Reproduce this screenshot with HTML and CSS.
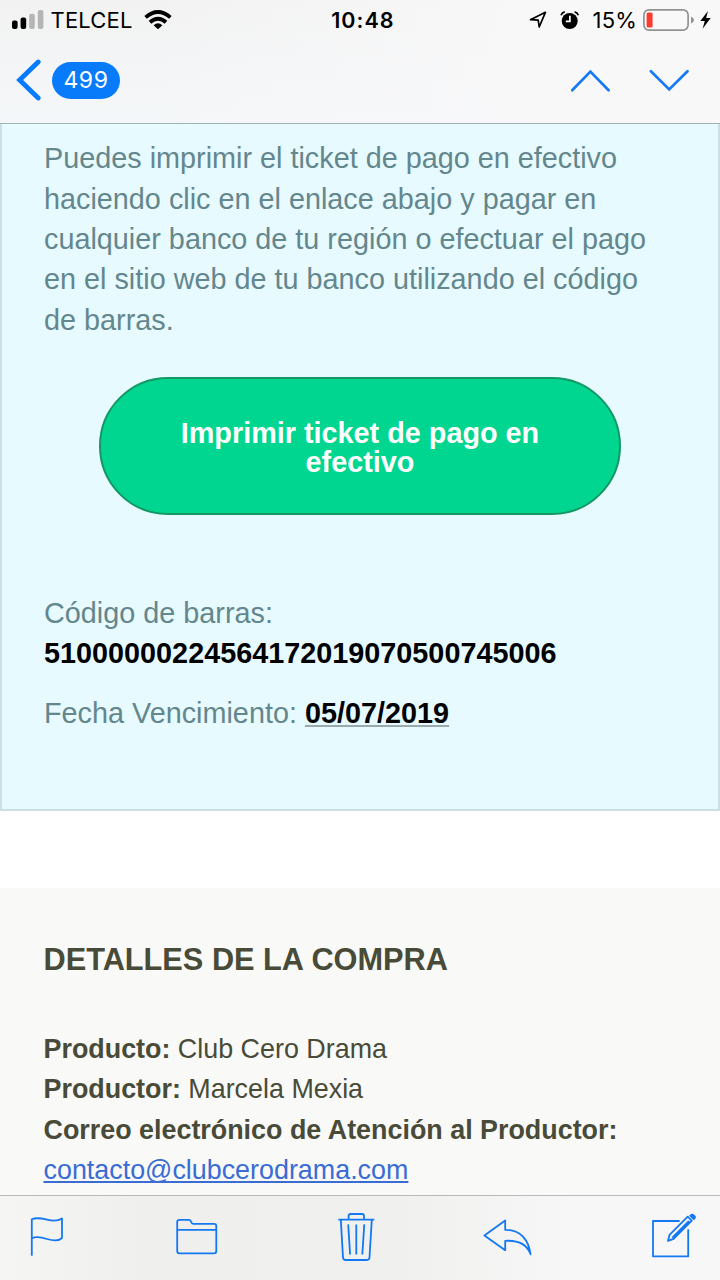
FILE: index.html
```html
<!DOCTYPE html>
<html lang="es">
<head>
<meta charset="utf-8">
<title>Correo</title>
<link rel="stylesheet" href="styles.css">
</head>
<body>
<div class="screen">
  <header class="top">
    <div class="status">
      <div class="status-left">
        <svg class="signal" width="32" height="20" viewBox="0 0 32 20"><rect y="10.5" width="5.6" height="8.5" rx="2"/><rect x="8.6" y="7.5" width="5.6" height="11.5" rx="2"/><g fill="#b5b5b6"><rect x="17.2" y="3.7" width="5.6" height="15.3" rx="2"/><rect x="25.8" y="0" width="5.6" height="19" rx="2"/></g></svg>
        <span class="carrier">TELCEL</span>
        <svg class="wifi" width="28" height="20" viewBox="0 0 28 20"><g fill="none" stroke="#000" stroke-width="3.8"><path d="M1.6 7.4Q14-3.4 26.4 7.4"/><path d="M6 12.2Q14 5.2 22 12.2"/></g><path d="M14 19.2L9.6 15.2Q14 11.3 18.4 15.2Z"/></svg>
      </div>
      <span class="clock">10:48</span>
      <div class="status-right">
        <svg class="location" width="18" height="18" viewBox="0 0 18 18"><path d="M1.5 8.7L16.4 1.3 10.2 16 9.2 9.1Z" fill="none" stroke="#000" stroke-width="1.7" stroke-linejoin="round"/></svg>
        <svg class="alarm" width="20" height="19" viewBox="0 0 20 19"><circle cx="9.7" cy="10" r="8"/><path d="M1 4.2Q2 1.5 4.8.9M18.4 4.2Q17.4 1.5 14.6.9" fill="none" stroke="#000" stroke-width="1.6"/><path d="M9.9 4.8V10.4H5.8" fill="none" stroke="#fff" stroke-width="1.7"/></svg>
        <span class="percent">15%</span>
        <svg class="battery" width="52" height="22" viewBox="0 0 52 22"><rect x=".9" y=".9" width="44.2" height="20.2" rx="5" fill="none" stroke="#929294" stroke-width="1.7"/><rect x="3.6" y="3.5" width="6" height="15" rx="1.5" fill="#fb3b30"/><path d="M48 7.4Q51 9 51 11T48 14.6Z" fill="#929294"/></svg>
        <svg class="bolt" width="11" height="18" viewBox="0 0 11 18"><path d="M8 0L.3 10H4.8L2.6 17.8 10.7 7H6.1Z"/></svg>
      </div>
    </div>
    <nav class="nav">
      <a class="back"><svg width="26" height="42" viewBox="0 0 26 42"><path d="M23.2 3L4.6 21 23.2 39" fill="none" stroke="#087bfb" stroke-width="4.8" stroke-linecap="round"/></svg><span class="count">499</span></a>
      <div class="arrows">
        <svg width="40" height="24" viewBox="0 0 40 24"><path d="M1.2 22.3L19.4 3.6 37.6 22.3"/></svg>
        <svg width="40" height="24" viewBox="0 0 40 24"><path d="M1.9 3.2L20.2 21.4 38.5 3.2"/></svg>
      </div>
    </nav>
  </header>
  <main class="mail">
    <section class="ticket">
      <p>Puedes imprimir el ticket de pago en efectivo haciendo clic en el enlace abajo y pagar en cualquier banco de tu región o efectuar el pago en el sitio web de tu banco utilizando el código de barras.</p>
      <a class="print">Imprimir ticket de pago en efectivo</a>
      <p>Código de barras:<br><b>51000000224564172019070500745006</b></p>
      <p class="due">Fecha Vencimiento: <b class="date">05/07/2019</b></p>
    </section>
    <section class="details">
      <h2>DETALLES DE LA COMPRA</h2>
      <p><b>Producto:</b> Club Cero Drama<br><b>Productor:</b> Marcela Mexia<br><b>Correo electrónico de Atención al Productor:</b><br><a class="mailto">contacto@clubcerodrama.com</a></p>
    </section>
  </main>
  <footer class="toolbar">
    <svg class="flag" width="34" height="42" viewBox="0 0 34 42"><path d="M1.8 39.7V3.3Q6.5 1 17 3.7Q26.5 6.2 32 2.5V22Q27.5 26.3 17 23Q7 19.7 2 22.3"/></svg>
    <svg class="folder" width="42" height="38" viewBox="0 0 42 38"><path d="M1.2 33V4Q1.2 1.8 3.4 1.8H13Q14.3 1.8 14.9 3.4L15.5 4.7Q16 5.9 17.4 5.9H38Q40.3 5.9 40.3 8.2V33Q40.3 35.3 38 35.3H3.5Q1.2 35.3 1.2 33ZM1.2 11.8H40.3"/></svg>
    <svg class="trash" width="38" height="50" viewBox="0 0 38 50"><path d="M.3 7.6H36.3M10.6 7.6V4Q10.6 2 12.6 2H24Q26 2 26 4V7.6M2.8 7.6L5 45.5Q5.2 48 7.8 48H29Q31.3 48 31.5 45.5L33.8 7.6M10.2 12.4L12.1 42.5M18.3 12.4V42.5M26.3 12.4L24.3 42.5"/></svg>
    <svg class="reply" width="50" height="40" viewBox="0 0 50 40"><path d="M1.4 17.4L22.2 2.5V11.8Q43.8 12 47.6 36.3Q42.5 21.8 22.2 22.8V32.2Z"/></svg>
    <svg class="compose" width="46" height="46" viewBox="0 0 46 46"><path d="M28.6 9H2V44.3H37.2V17.3M18.5 22.8L36.7 4.6 40.8 8.7 22.6 26.9 17 28.9ZM21.3 25.6L38 8.9"/><path class="solid" d="M39 2.9Q41 .8 43.6 3T43.7 7.4L42.7 8.3 38.1 3.8Z"/></svg>
  </footer>
</div>
</body>
</html>
```
FILE: styles.css
```css
* { box-sizing: border-box; }
body { margin: 0; font-family: "Liberation Sans", Arial, sans-serif; }
.screen { width: 720px; height: 1280px; display: flex; flex-direction: column; overflow: hidden; background: #fff; }
svg { display: block; flex: none; }
.top { flex: none; height: 124px; border-bottom: 1px solid #a4b1b5; background: linear-gradient(90deg, rgba(249,249,249,0) 20%, #f8f8f9 75%), linear-gradient(#f2f2f2, #f4f7f9); }
.status { height: 40px; display: grid; grid-template-columns: 1fr 66px 1fr; align-items: center; padding: 0 9px 0 11.5px; font-family: Inter, sans-serif; font-size: 22px; line-height: 40px; color: #000; }
.status-left, .status-right { display: flex; align-items: center; }
.status-right { justify-content: flex-end; }
.carrier { width: 83px; margin-left: 7px; letter-spacing: .2px; white-space: nowrap; }
.wifi { margin-left: 10.5px; }
.clock { padding-left: 3px; font-weight: 600; font-size: 21.5px; text-align: center; white-space: nowrap; letter-spacing: 1px; }
.alarm { margin-left: 13px; }
.percent { margin-left: 12.5px; width: 44px; white-space: nowrap; letter-spacing: .2px; }
.battery { margin-left: 6px; }
.bolt { margin-left: 5px; margin-right: .5px; }
.nav { height: 80px; display: flex; justify-content: space-between; align-items: center; padding: 0 31px 0 15px; }
.back { display: flex; align-items: center; gap: 11px; }
.count { width: 68px; height: 37px; border-radius: 19px; background: #087bfb; color: #fff; font: 23px/37px Inter, sans-serif; text-align: center; letter-spacing: .6px; }
.arrows { display: flex; gap: 38px; }
.arrows path { fill: none; stroke: #147bf5; stroke-width: 2.7; stroke-linecap: round; }
.mail { flex: 1; min-height: 0; overflow: hidden; font-size: 28.8px; line-height: 40.32px; }
.mail p { margin: 0; }
.ticket { height: 687px; padding: 14.4px 56px 0 42px; border: 2px solid #cbdfe4; border-top: 0; background: #e6faff; color: #64868d; }
.ticket b { color: #000; }
.print { display: block; width: 522px; height: 138px; margin: 37px 0 77.6px 55px; padding: 40px 70px 0; border: 2px solid #139865; border-radius: 69px; background: #00d68f; color: #fff; font-weight: 700; line-height: 28.8px; text-align: center; }
.ticket .due { margin-top: 19.4px; }
.date { text-decoration: underline 2px #9aa9ad; text-underline-offset: 2px; text-decoration-skip-ink: none; }
.details { height: 400px; margin-top: 77px; padding: 52px 43.5px 0; background: #f9f9f8; color: #484b38; font-size: 26.88px; }
.details h2 { margin: 0 0 49px; font-size: 30.72px; line-height: 40px; white-space: nowrap; }
.mailto { color: #3a6cd4; text-decoration: underline 2px; text-underline-offset: 2px; text-decoration-skip-ink: none; }
.toolbar { flex: none; height: 85px; border-top: 1px solid #b9b9b9; display: flex; align-items: flex-start; padding-left: 30px; background: linear-gradient(90deg, #f5f5f4, #efefee 20%, #f0f0ef 55%, #f7f7f7 80%); }
.toolbar path { fill: none; stroke: #1478f2; stroke-width: 1.8; stroke-linejoin: round; }
.toolbar .solid { fill: #1478f2; stroke: none; }
.flag { margin-top: 20px; }
.folder { margin: 22px 0 0 112px; }
.trash { margin: 16px 0 0 120px; }
.reply { margin: 21.5px 0 0 107px; }
.compose { margin: 16px 0 0 118px; }
```
